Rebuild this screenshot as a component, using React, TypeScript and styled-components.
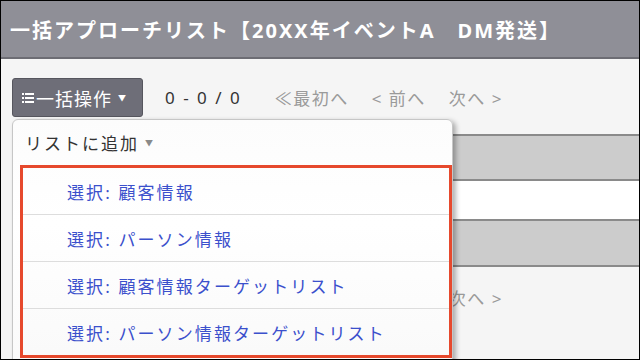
import React from 'react'
import styled, { createGlobalStyle } from 'styled-components'

const GlobalStyle = createGlobalStyle`
  body {
    margin: 0;
    font-family: "Noto Sans", "Noto Sans CJK JP", sans-serif;
  }
`

const Frame = styled.div`
  position: relative;
  width: 640px;
  height: 360px;
  box-sizing: border-box;
  border: 1px solid #000;
  background: #f5f5f5;
  overflow: hidden;
`

const Header = styled.div`
  display: flex;
  align-items: center;
  height: 56px;
  padding: 0 9px;
  background: #8f8f97;
  border-bottom: 2px solid #6d6d74;
  color: #fff;
  font-size: 20px;
  font-weight: 700;
  letter-spacing: 2px;
  white-space: nowrap;
`

const Content = styled.div`
  padding: 19px 0 0 11px;
`

const Toolbar = styled.div<{ $top?: number }>`
  display: flex;
  align-items: center;
  height: 39px;
  margin-top: ${props => props.$top || 0}px;
`

const BulkButton = styled.button`
  display: flex;
  align-items: center;
  width: 131px;
  height: 39px;
  padding: 0 0 0 9px;
  box-sizing: border-box;
  background: #6e6e78;
  border: 1px solid #56565e;
  border-radius: 3px;
  color: #fff;
  font-family: inherit;
  font-size: 18px;
  letter-spacing: 1px;
  white-space: nowrap;
`

const Caret = styled.span<{ $color?: string }>`
  margin-left: 6px;
  font-size: 8px;
  color: ${props => props.$color || '#fff'};
`

const Count = styled.span`
  margin-left: 22px;
  font-size: 17px;
  letter-spacing: 2px;
  color: #333;
  white-space: nowrap;
`

const Pager = styled.div`
  display: flex;
  gap: 23px;
  margin-left: 33px;
`

const PageLink = styled.span`
  font-size: 17px;
  letter-spacing: 1.5px;
  color: #9a9a9a;
  white-space: nowrap;
`

const Table = styled.div`
  margin-top: 17px;
  border-top: 2px solid #8a8a8a;
`

const Row = styled.div<{ $height: number; $white?: boolean }>`
  height: ${props => props.$height}px;
  background: ${props => (props.$white ? '#fff' : '#cccccc')};
  border-bottom: 2px solid #8a8a8a;
`

const Dropdown = styled.div`
  position: absolute;
  left: 11px;
  top: 118px;
  width: 441px;
  bottom: -20px;
  box-sizing: border-box;
  border: 1px solid #c6c6c6;
  border-radius: 6px 6px 0 0;
  background: linear-gradient(180deg, #fcfcfc 0%, #ffffff 40%, #f9f9f9 100%);
  box-shadow: 3px 2px 5px rgba(0, 0, 0, 0.3);
`

const MenuTitle = styled.div`
  display: flex;
  align-items: center;
  height: 45px;
  padding-left: 12px;
  font-size: 17px;
  letter-spacing: 2px;
  color: #333;
`

const SubList = styled.ul`
  list-style: none;
  margin: 0 0 0 7px;
  padding: 0;
  border: 3px solid #e6492d;
`

const SubItem = styled.li`
  display: flex;
  align-items: center;
  height: 46px;
  padding-left: 44px;
  font-size: 17px;
  letter-spacing: 2.1px;
  color: #3b50cc;
  white-space: nowrap;
  & + & {
    border-top: 1px solid #dddddd;
  }
`

function ListIcon() {
  return (
    <svg width="12" height="11" viewBox="0 0 12 11" style={{ marginRight: 2 }}>
      <g fill="#fff">
        <rect x="0" y="1" width="2" height="2" />
        <rect x="0" y="5" width="2" height="2" />
        <rect x="0" y="9" width="2" height="2" />
        <rect x="3" y="1" width="9" height="2" />
        <rect x="3" y="5" width="9" height="2" />
        <rect x="3" y="9" width="9" height="2" />
      </g>
    </svg>
  )
}

function PagerBar({ top }: { top?: number }) {
  return (
    <Toolbar $top={top}>
      <BulkButton>
        <ListIcon />
        一括操作
        <Caret>▼</Caret>
      </BulkButton>
      <Count>0 - 0 / 0</Count>
      <Pager>
        <PageLink>≪最初へ</PageLink>
        <PageLink>&lt; 前へ</PageLink>
        <PageLink>次へ &gt;</PageLink>
      </Pager>
    </Toolbar>
  )
}

const items = [
  '選択: 顧客情報',
  '選択: パーソン情報',
  '選択: 顧客情報ターゲットリスト',
  '選択: パーソン情報ターゲットリスト'
]

export default function App() {
  return (
    <Frame>
      <GlobalStyle />
      <Header>一括アプローチリスト【20XX年イベントA　DM発送】</Header>
      <Content>
        <PagerBar />
        <Table>
          <Row $height={43} />
          <Row $height={38} $white />
          <Row $height={44} />
        </Table>
        <PagerBar top={11} />
      </Content>
      <Dropdown>
        <MenuTitle>
          リストに追加
          <Caret $color="#8a8a8a">▼</Caret>
        </MenuTitle>
        <SubList>
          {items.map(item => (
            <SubItem key={item}>{item}</SubItem>
          ))}
        </SubList>
      </Dropdown>
    </Frame>
  )
}
